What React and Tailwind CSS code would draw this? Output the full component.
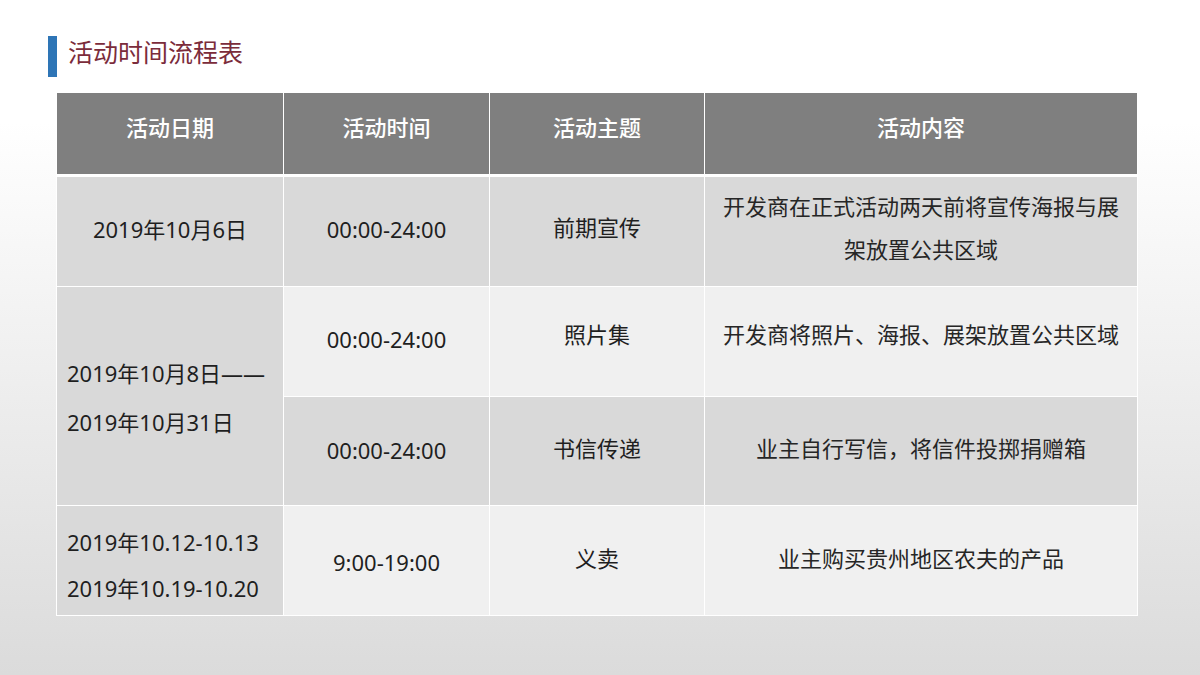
import React from "react";

const font = { fontFamily: '"Noto Sans", "Noto Sans CJK SC", sans-serif' };

function Cell({ children, className = "" }) {
  return (
    <div className={"flex items-center justify-center text-center text-[22px] text-[#1f1f1f] " + className}>
      {children}
    </div>
  );
}

export default function App() {
  return (
    <div
      className="w-[1200px] h-[675px] overflow-hidden bg-[linear-gradient(to_bottom,#ffffff_18%,#dbdbdb_100%)]"
      style={font}
    >
      <div className="flex items-center gap-[11px] pl-[48px] pt-[36px]">
        <div className="w-[9px] h-[41px] bg-[#2e75b6]" />
        <div
          className="text-[25px] leading-[32px] text-[#7b2c3b] pb-[6px]"
          style={{ fontFamily: '"Liberation Serif", "Noto Sans CJK SC", serif' }}
        >
          活动时间流程表
        </div>
      </div>

      <div className="ml-[56px] mt-[15px] w-[1082px] bg-white p-px grid grid-cols-[226px_205px_214px_432px] grid-rows-[83px_109px_109px_108px_109px] gap-px">
        {["活动日期", "活动时间", "活动主题", "活动内容"].map((h) => (
          <div
            key={h}
            className="bg-[#7f7f7f] border-b-[2px] border-white flex items-center justify-center pb-[12px] text-white text-[22px] font-medium"
          >
            {h}
          </div>
        ))}

        <Cell className="bg-[#d9d9d9] pb-[4px]">2019年10月6日</Cell>
        <Cell className="bg-[#d9d9d9] pb-[4px]">00:00-24:00</Cell>
        <Cell className="bg-[#d9d9d9] pb-[8px]">前期宣传</Cell>
        <Cell className="bg-[#d9d9d9] px-[12px] leading-[43px] text-[#262626] pb-[8px]">
          开发商在正式活动两天前将宣传海报与展架放置公共区域
        </Cell>

        <div className="row-span-2 bg-[#d9d9d9] flex flex-col justify-center pl-[10px] pt-[3px] text-[22px] leading-[49px] text-[#1f1f1f]">
          <div>2019年10月8日——</div>
          <div>2019年10月31日</div>
        </div>
        <Cell className="bg-[#f0f0f0] pb-[4px]">00:00-24:00</Cell>
        <Cell className="bg-[#f0f0f0] pb-[14px]">照片集</Cell>
        <Cell className="bg-[#f0f0f0] pb-[14px] text-[#262626]">开发商将照片、海报、展架放置公共区域</Cell>

        <Cell className="bg-[#d9d9d9] pb-[2px]">00:00-24:00</Cell>
        <Cell className="bg-[#d9d9d9] pb-[6px]">书信传递</Cell>
        <Cell className="bg-[#d9d9d9] pb-[6px] text-[#262626]">业主自行写信，将信件投掷捐赠箱</Cell>

        <div className="bg-[#d9d9d9] flex flex-col justify-center pl-[10px] pt-[8px] text-[22px] leading-[46px] text-[#1f1f1f]">
          <div>2019年10.12-10.13</div>
          <div>2019年10.19-10.20</div>
        </div>
        <Cell className="bg-[#f0f0f0] pt-[4px]">9:00-19:00</Cell>
        <Cell className="bg-[#f0f0f0] pb-[4px]">义卖</Cell>
        <Cell className="bg-[#f0f0f0] pb-[4px] text-[#262626]">业主购买贵州地区农夫的产品</Cell>
      </div>
    </div>
  );
}
